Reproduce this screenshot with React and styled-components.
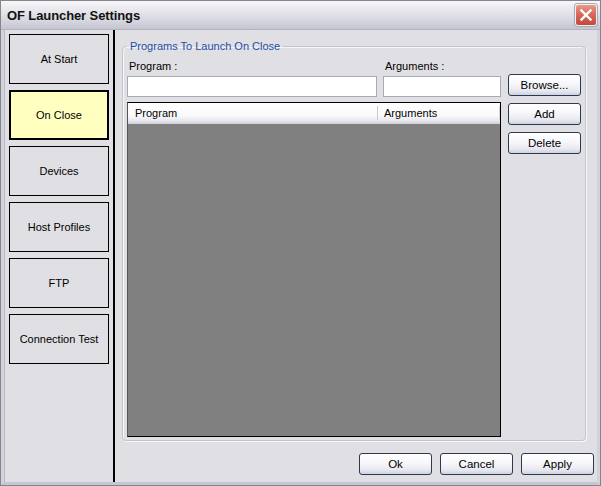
import React from "react";
import styled, { createGlobalStyle, css } from "styled-components";

const Global = createGlobalStyle`
  html, body { margin: 0; padding: 0; background: #fff; }
  body { font-family: "Liberation Sans", Arial, sans-serif; font-size: 11px; color: #000; }
  * { box-sizing: border-box; }
`;

const Window = styled.div`
  width: 601px;
  height: 486px;
  display: flex;
  flex-direction: column;
  border: 1px solid #85858f;
  background: #e0dfe3;
`;

const TitleBar = styled.div`
  height: 29px;
  flex: none;
  display: flex;
  align-items: center;
  justify-content: space-between;
  padding: 0 3px 0 6px;
  background: linear-gradient(#f7f7f9 0%, #e6e6ec 35%, #d6d6df 70%, #c4c5d2 100%);
  border-bottom: 1px solid #b4b4c0;
`;

const Title = styled.span`
  font-size: 13px;
  font-weight: bold;
  color: #111;
  letter-spacing: -0.1px;
`;

const CloseButton = styled.button`
  width: 22px;
  height: 22px;
  padding: 0;
  border: 1px solid #f2f2f4;
  border-radius: 3px;
  background: linear-gradient(#e9998b 0%, #d86b5b 45%, #c2483a 100%);
  box-shadow: 0 0 0 1px #a9a9b4;
  display: flex;
  align-items: center;
  justify-content: center;
`;

const Body = styled.div`
  flex: 1;
  min-height: 0;
  display: flex;
  border-left: 3px solid #d2d2da;
  border-right: 3px solid #d2d2da;
  border-bottom: 3px solid #c6c6cf;
`;

const Sidebar = styled.nav`
  width: 111px;
  flex: none;
  display: flex;
  flex-direction: column;
  gap: 6px;
  padding: 4px 4px 0 4px;
  border-left: 1px solid #b9b9c2;
  border-right: 2px solid #000;
`;

const NavButton = styled.div`
  width: 100px;
  height: 50px;
  display: flex;
  align-items: center;
  justify-content: center;
  border: 1px solid #000;
  background: #e0dfe3;
  ${(p) =>
    p.$active &&
    css`
      border-width: 2px;
      background: #ffffc0;
    `}
`;

const Main = styled.main`
  flex: 1;
  min-width: 0;
  display: flex;
  flex-direction: column;
  padding: 10px 3px 7px 7px;
`;

const Group = styled.fieldset`
  flex: 1;
  min-height: 0;
  margin: 0 8px 0 0;
  padding: 7px 4px 3px 4px;
  border: 1px solid #c4c4ce;
  border-radius: 4px;
  box-shadow: 1px 1px 0 #f6f6f8, inset 1px 1px 0 #f6f6f8;
  display: flex;
  flex-direction: column;
  min-inline-size: 0;
`;

const Legend = styled.legend`
  padding: 0 3px;
  color: #1d4fa8;
  font-size: 11px;
  line-height: 13px;
`;

const Grid = styled.div`
  flex: 1;
  min-height: 0;
  display: grid;
  grid-template-columns: 250px 118px 73px;
  grid-template-rows: auto 21px 1fr;
  column-gap: 6px;
`;

const Label = styled.label`
  line-height: 13px;
  margin-bottom: 3px;
  padding-left: 2px;
`;

const Input = styled.input`
  height: 21px;
  width: 100%;
  border: 1px solid #a6abb8;
  background: #fff;
  font: inherit;
  padding: 0 3px;
`;

const SideButtons = styled.div`
  grid-column: 3;
  grid-row: 2 / 4;
  display: flex;
  flex-direction: column;
  gap: 7px;
  margin: -2px 0 0 1px;
`;

const Button = styled.button`
  width: 73px;
  height: 22px;
  padding: 0;
  font: inherit;
  font-size: 11.5px;
  color: #000;
  border: 1px solid #2b3a50;
  border-radius: 3px;
  background: linear-gradient(#ffffff 0%, #f7f7fa 45%, #e7e8ef 80%, #cfd1df 100%);
`;

const List = styled.div`
  grid-column: 1 / 3;
  grid-row: 3;
  margin-top: 5px;
  display: flex;
  flex-direction: column;
  border: 1px solid #000;
  border-left-color: #555;
  background: #808080;
`;

const ListHeader = styled.div`
  height: 21px;
  flex: none;
  display: grid;
  grid-template-columns: 250px 1fr;
  background: linear-gradient(#ffffff 0%, #fafafc 60%, #e6e6ec 85%, #cfcfd8 100%);
`;

const HeaderCell = styled.div`
  display: flex;
  align-items: center;
  padding-left: ${(p) => (p.$first ? "7px" : "6px")};
  border-right: 1px solid ${(p) => (p.$first ? "#c9c9d2" : "#d8d8e0")};
  margin: 3px 0 4px;
  line-height: 13px;
`;

const Footer = styled.footer`
  flex: none;
  display: flex;
  justify-content: flex-end;
  gap: 8px;
  margin-top: 12px;
`;

const navItems = ["At Start", "On Close", "Devices", "Host Profiles", "FTP", "Connection Test"];

export default function App() {
  return (
    <>
      <Global />
      <Window>
        <TitleBar>
          <Title>OF Launcher Settings</Title>
          <CloseButton aria-label="Close">
            <svg width="14" height="14" viewBox="0 0 14 14">
              <path d="M2.5 2.5 L11.5 11.5 M11.5 2.5 L2.5 11.5" stroke="#fff" strokeWidth="2.4" strokeLinecap="square" />
            </svg>
          </CloseButton>
        </TitleBar>
        <Body>
          <Sidebar>
            {navItems.map((n) => (
              <NavButton key={n} $active={n === "On Close"}>
                {n}
              </NavButton>
            ))}
          </Sidebar>
          <Main>
            <Group>
              <Legend>Programs To Launch On Close</Legend>
              <Grid>
                <Label>Program :</Label>
                <Label>Arguments :</Label>
                <span />
                <Input />
                <Input />
                <SideButtons>
                  <Button>Browse...</Button>
                  <Button>Add</Button>
                  <Button>Delete</Button>
                </SideButtons>
                <List>
                  <ListHeader>
                    <HeaderCell $first>Program</HeaderCell>
                    <HeaderCell>Arguments</HeaderCell>
                  </ListHeader>
                </List>
              </Grid>
            </Group>
            <Footer>
              <Button>Ok</Button>
              <Button>Cancel</Button>
              <Button>Apply</Button>
            </Footer>
          </Main>
        </Body>
      </Window>
    </>
  );
}
